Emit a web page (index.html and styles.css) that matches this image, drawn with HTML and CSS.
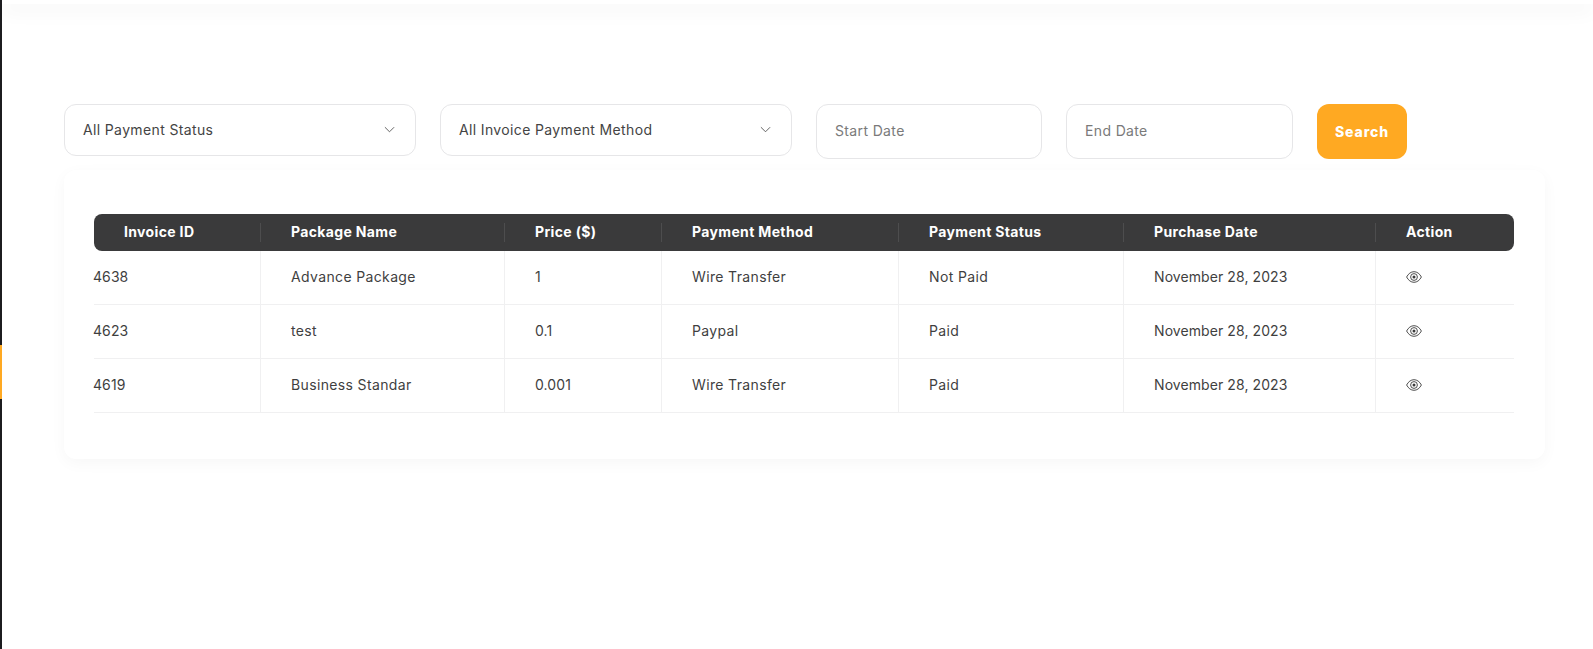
FILE: index.html
```html
<!DOCTYPE html>
<html lang="en">
<head>
<meta charset="utf-8">
<title>Invoices</title>
<link rel="stylesheet" href="styles.css">
</head>
<body>
<aside class="rail"><span class="rail-mark"></span></aside>
<div class="page">
  <header class="topbar"></header>
  <main class="content">
    <form class="filters">
      <div class="select"><span>All Payment Status</span>
        <svg class="chev" viewBox="0 0 12 7"><path d="M1 1l5 5 5-5"/></svg></div>
      <div class="select"><span>All Invoice Payment Method</span>
        <svg class="chev" viewBox="0 0 12 7"><path d="M1 1l5 5 5-5"/></svg></div>
      <div class="date date-start">Start Date</div>
      <div class="date date-end">End Date</div>
      <button class="search" type="button">Search</button>
    </form>
    <section class="card">
      <table class="invoices">
        <colgroup>
          <col class="c1"><col class="c2"><col class="c3"><col class="c4"><col class="c5"><col class="c6"><col class="c7">
        </colgroup>
        <thead>
          <tr><th>Invoice ID</th><th>Package Name</th><th>Price ($)</th><th>Payment Method</th><th>Payment Status</th><th>Purchase Date</th><th>Action</th></tr>
        </thead>
        <tbody>
          <tr><td class="num">4638</td><td>Advance Package</td><td class="num">1</td><td>Wire Transfer</td><td>Not Paid</td><td class="num">November 28, 2023</td>
            <td><svg class="eye" viewBox="0 0 16 12"><path d="M.6 6C2.400 2.600 5 .7 8 .7s5.600 1.900 7.400 5.300C13.600 9.400 11 11.300 8 11.300S2.400 9.400.6 6z"/><circle cx="8" cy="6" r="3.400"/><circle class="pupil" cx="8" cy="6" r="1.500"/></svg></td></tr>
          <tr><td class="num">4623</td><td>test</td><td class="num">0.1</td><td>Paypal</td><td>Paid</td><td class="num">November 28, 2023</td>
            <td><svg class="eye" viewBox="0 0 16 12"><path d="M.6 6C2.400 2.600 5 .7 8 .7s5.600 1.900 7.400 5.300C13.600 9.400 11 11.300 8 11.300S2.400 9.400.6 6z"/><circle cx="8" cy="6" r="3.400"/><circle class="pupil" cx="8" cy="6" r="1.500"/></svg></td></tr>
          <tr><td class="num">4619</td><td>Business Standar</td><td class="num">0.001</td><td>Wire Transfer</td><td>Paid</td><td class="num">November 28, 2023</td>
            <td><svg class="eye" viewBox="0 0 16 12"><path d="M.6 6C2.400 2.600 5 .7 8 .7s5.600 1.900 7.400 5.300C13.600 9.400 11 11.300 8 11.300S2.400 9.400.6 6z"/><circle cx="8" cy="6" r="3.400"/><circle class="pupil" cx="8" cy="6" r="1.500"/></svg></td></tr>
        </tbody>
      </table>
    </section>
  </main>
</div>
</body>
</html>
```

FILE: styles.css
```css
* { box-sizing: border-box; }
html, body { height: 100%; }
body {
  margin: 0;
  display: flex;
  background: #fff;
  color: #3f3f3f;
  font-family: "Inter", "Open Sans", sans-serif;
  font-size: 14px;
  letter-spacing: .36px;
  overflow: hidden;
}
.rail {
  position: relative;
  z-index: 1;
  flex: 0 0 2px;
  background: #1c1c1f;
}
.rail-mark {
  position: absolute;
  left: 0;
  top: 345px;
  width: 2px;
  height: 54px;
  background: #ffa922;
}
.page { flex: 1; min-width: 0; }
.topbar {
  height: 4px;
  background: #fff;
  box-shadow: 0 4px 20px rgba(0, 0, 0, .12);
}
.content { padding: 100px 0 0 62px; }
.filters {
  display: flex;
  align-items: flex-start;
  gap: 24px;
}
.select, .date {
  display: flex;
  align-items: center;
  background: #fff;
  border: 1px solid #e6e6e8;
  border-radius: 12px;
}
.select {
  justify-content: space-between;
  width: 352px;
  height: 52px;
  padding: 0 20px 2px 18px;
  color: #444;
}
.chev {
  width: 11px;
  height: 7px;
  fill: none;
  stroke: #555;
  stroke-width: 1;
}
.date {
  height: 55px;
  padding: 0 18px 2px;
  color: #7a7a7a;
}
.date-start { width: 226px; }
.date-end { width: 227px; }
.search {
  width: 90px;
  height: 55px;
  border: 0;
  border-radius: 12px;
  background: #ffa922;
  color: #fff;
  font: 800 14px "Inter", sans-serif;
  letter-spacing: .9px;
}
.card {
  width: 1481px;
  margin-top: 11px;
  padding: 44px 30px 46px;
  background: #fff;
  border-radius: 12px;
  box-shadow: 0 4px 16px rgba(0, 0, 0, .035);
}
.invoices {
  width: 1420px;
  table-layout: fixed;
  border-collapse: separate;
  border-spacing: 0;
}
.c1 { width: 166px; }
.c2 { width: 244px; }
.c3 { width: 157px; }
.c4 { width: 237px; }
.c5 { width: 225px; }
.c6 { width: 252px; }
.c7 { width: 139px; }
.invoices th {
  position: relative;
  height: 37px;
  padding: 0 0 2px 31px;
  background: #3a3a3b;
  color: #fff;
  font-weight: 700;
  font-size: 14px;
  letter-spacing: .35px;
  text-align: left;
}
.invoices th:first-child { padding-left: 30px; border-radius: 8px 0 0 8px; }
.invoices th:last-child { border-radius: 0 8px 8px 0; }
.invoices th + th::before {
  content: "";
  position: absolute;
  left: 0;
  top: 9px;
  bottom: 9px;
  width: 1px;
  background: #4d4d4e;
}
.invoices td {
  height: 54px;
  padding: 0 0 2px 30px;
  border-bottom: 1px solid #f0f0f1;
  color: #3f3f3f;
}
.invoices td + td { border-left: 1px solid #f0f0f1; }
.invoices td:first-child { padding-left: 0; text-indent: -1px; }
.invoices .num { letter-spacing: .08px; }
.eye {
  display: block;
  width: 16px;
  height: 12px;
  fill: none;
  stroke: #3b3b3b;
  stroke-width: .9;
}
.pupil { fill: #3b3b3b; stroke: none; }
```
